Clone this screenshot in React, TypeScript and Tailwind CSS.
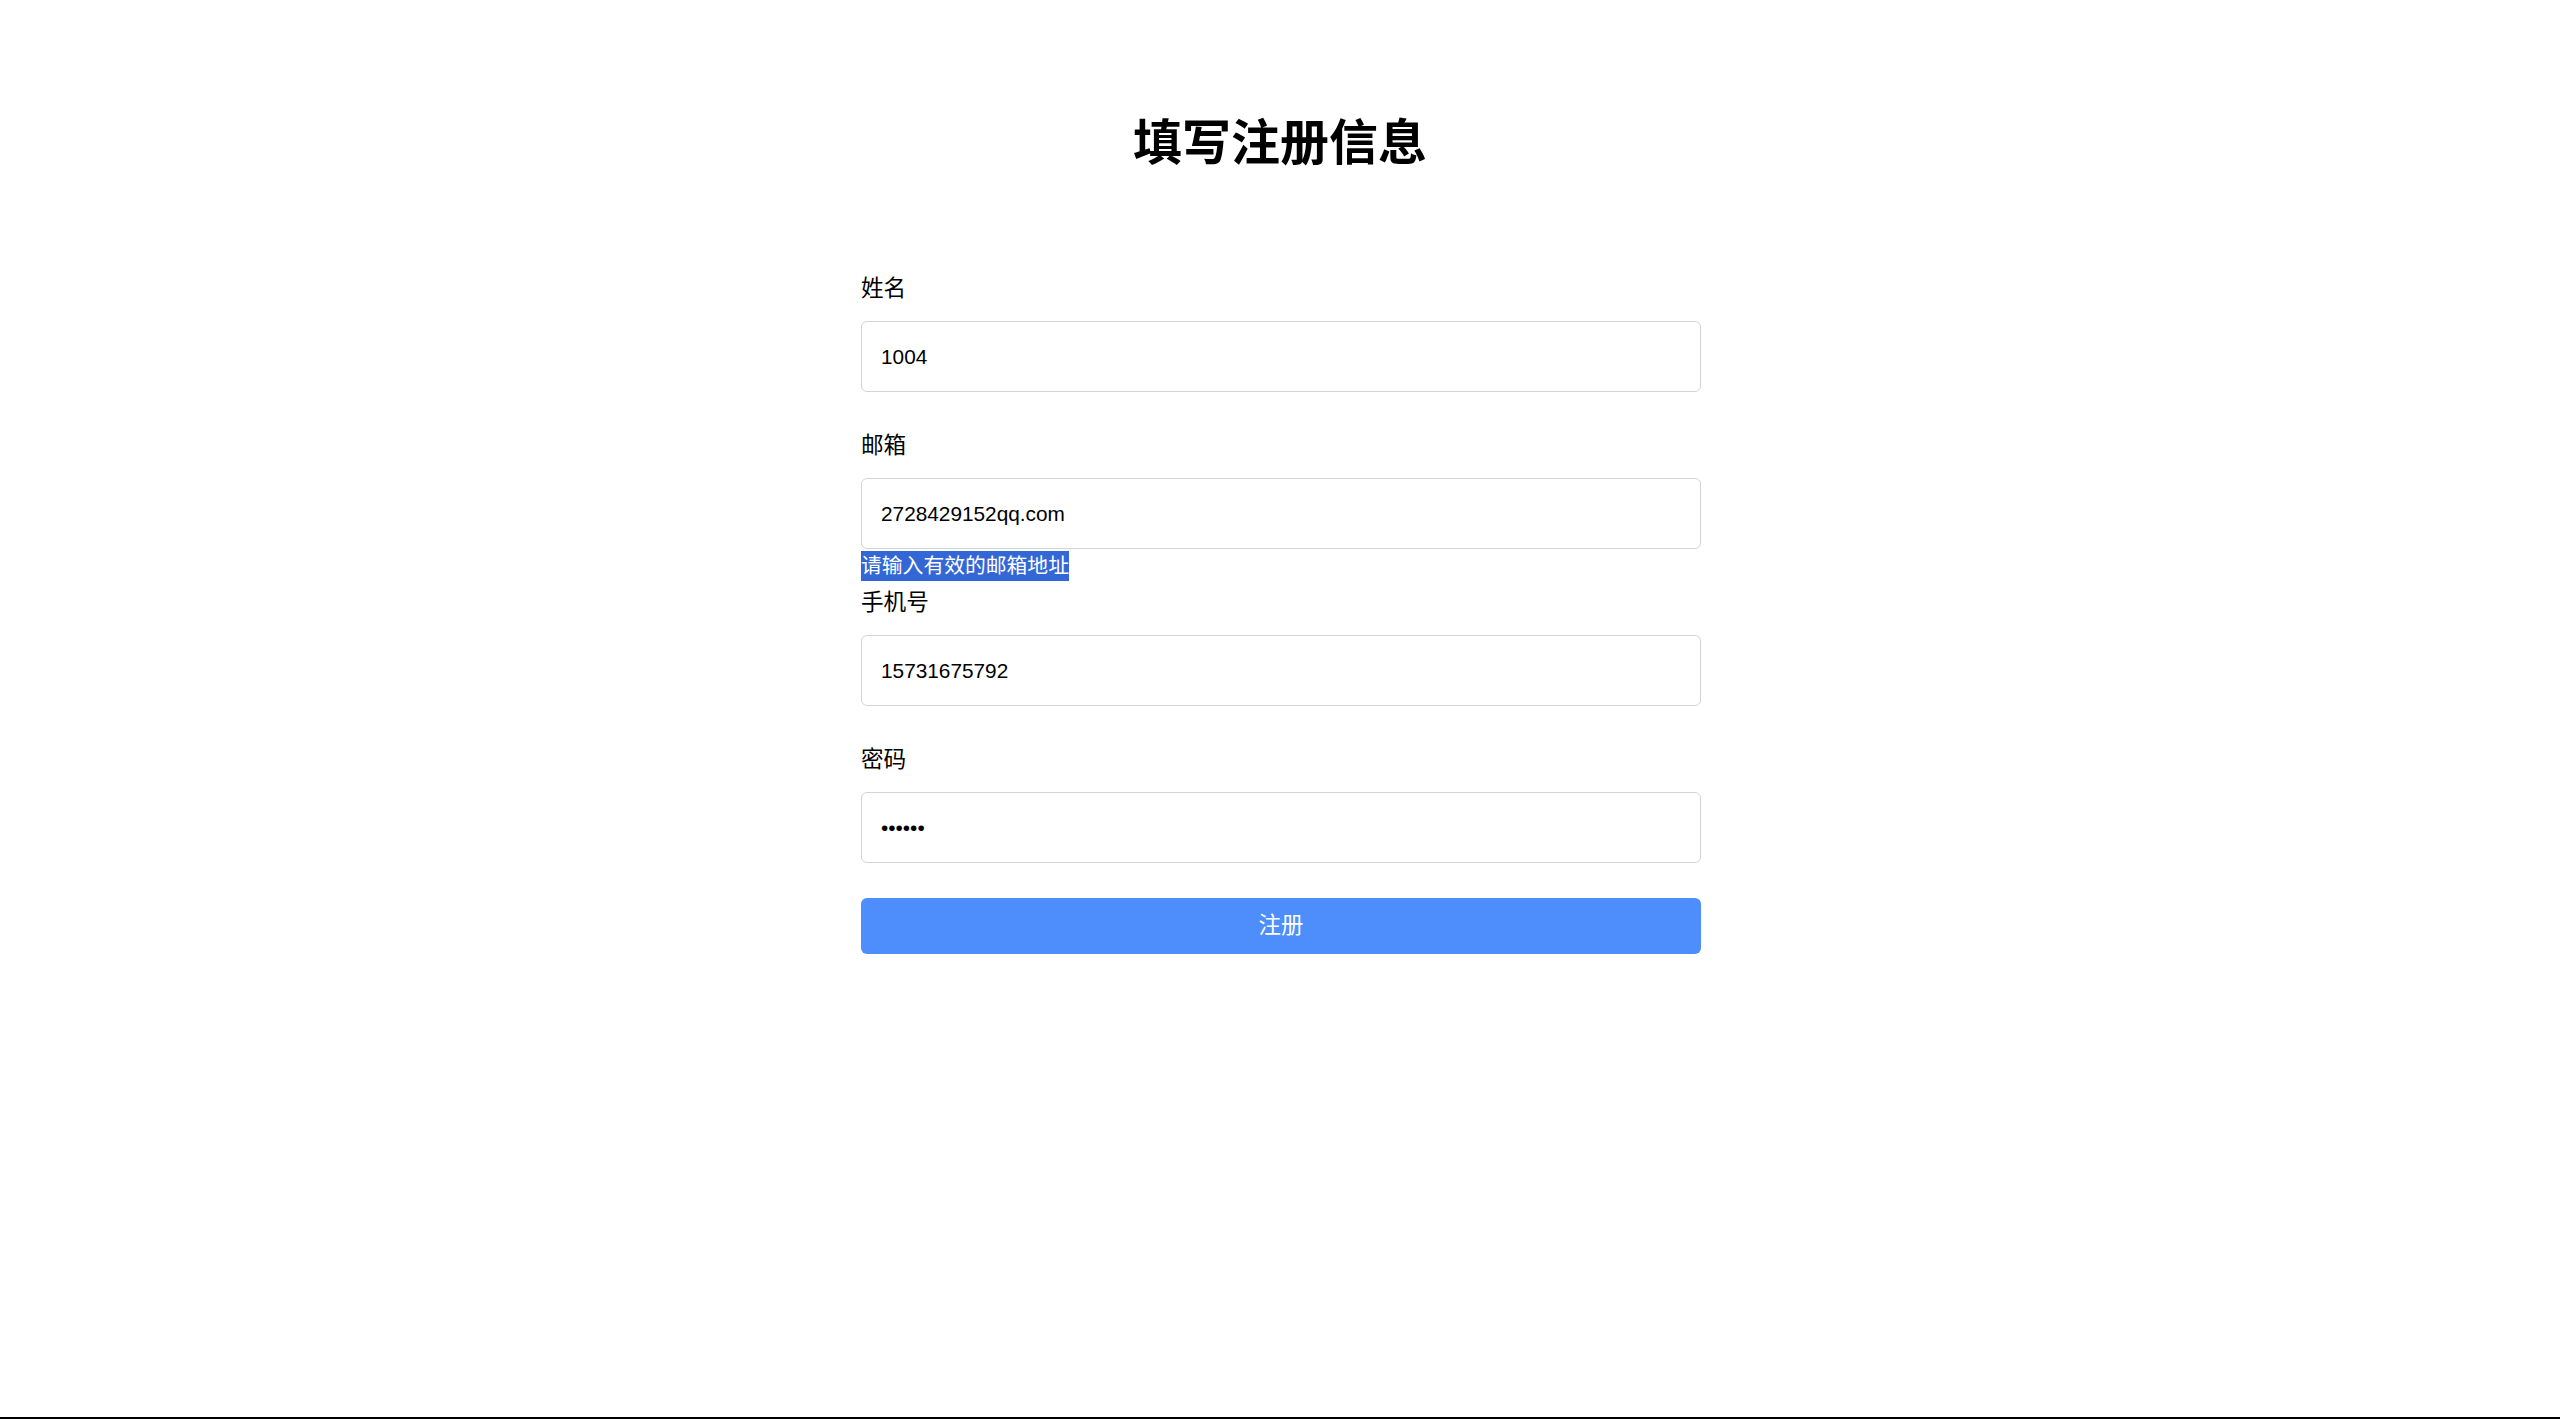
import React from "react";

const font = "font-['Liberation_Sans','Noto_Sans_CJK_SC',sans-serif]";

function Field({
  label,
  value,
  type = "text",
  error,
  slot = "h-[38px]",
}: {
  label: string;
  value: string;
  type?: string;
  error?: string;
  slot?: string;
}) {
  return (
    <div>
      <label className="block text-[22.6px] leading-[32px] text-black">{label}</label>
      <input
        type={type}
        defaultValue={value}
        readOnly
        className={`mt-[16px] block h-[71px] w-full rounded-[6px] border border-[#d1d5db] bg-white px-[19px] text-[20.8px] text-black outline-none ${font}`}
      />
      <div className={slot}>
        {error ? (
          <span className="mt-[2px] inline-block bg-[#3367d6] text-[20.8px] leading-[30px] text-white">
            {error}
          </span>
        ) : null}
      </div>
    </div>
  );
}

export default function App() {
  return (
    <div className={`min-h-[1419px] border-b-2 border-black bg-white ${font}`}>
      <div className="pt-[108px]">
        <h1 className="text-center text-[49px] font-bold leading-[70px] text-black">填写注册信息</h1>
        <div className="flex justify-center pl-[2px]">
          <form className="mt-[95px] w-[840px]" onSubmit={(e) => e.preventDefault()}>
            <Field label="姓名" value="1004" />
            <Field label="邮箱" value="2728429152qq.com" error="请输入有效的邮箱地址" />
            <Field label="手机号" value="15731675792" />
            <Field label="密码" value="123456" type="password" slot="h-[35px]" />
            <button
              type="submit"
              className="block h-[56px] w-full rounded-[6px] bg-[#4d8efc] text-[22.4px] text-white"
            >
              注册
            </button>
          </form>
        </div>
      </div>
    </div>
  );
}
